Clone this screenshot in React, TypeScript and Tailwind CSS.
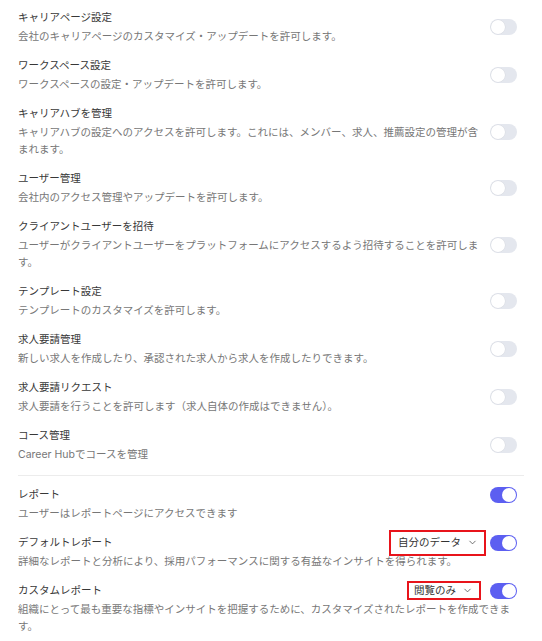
import { ChevronDown } from "lucide-react";

type Perm = {
  title: string;
  desc: string;
  on?: boolean;
};

const perms: Perm[] = [
  { title: "キャリアページ設定", desc: "会社のキャリアページのカスタマイズ・アップデートを許可します。" },
  { title: "ワークスペース設定", desc: "ワークスペースの設定・アップデートを許可します。" },
  {
    title: "キャリアハブを管理",
    desc: "キャリアハブの設定へのアクセスを許可します。これには、メンバー、求人、推薦設定の管理が含まれます。",
  },
  { title: "ユーザー管理", desc: "会社内のアクセス管理やアップデートを許可します。" },
  {
    title: "クライアントユーザーを招待",
    desc: "ユーザーがクライアントユーザーをプラットフォームにアクセスするよう招待することを許可します。",
  },
  { title: "テンプレート設定", desc: "テンプレートのカスタマイズを許可します。" },
  { title: "求人要請管理", desc: "新しい求人を作成したり、承認された求人から求人を作成したりできます。" },
  { title: "求人要請リクエスト", desc: "求人要請を行うことを許可します（求人自体の作成はできません）。" },
  { title: "コース管理", desc: "Career Hubでコースを管理" },
];

function Toggle({ on }: { on?: boolean }) {
  return (
    <div
      className={`relative shrink-0 w-[27px] h-[16px] rounded-full ${
        on ? "bg-[#5c5ff1]" : "bg-[#e4e7ee]"
      }`}
    >
      <span
        className={`absolute top-[1px] w-[14px] h-[14px] rounded-full bg-white ${
          on ? "right-[1px]" : "left-[1px] shadow-[0_0_0_0.5px_#d6d9e0]"
        }`}
      />
    </div>
  );
}

export default function App() {
  return (
    <div
      className="w-[542px] min-h-[641px] bg-white px-[18px] pt-[9px] text-[10.5px]"
      style={{ fontFamily: 'Inter, "Noto Sans CJK JP", sans-serif' }}
    >
      {/* basic permissions */}
      <div className="flex flex-col gap-[12px]">
        {perms.map((p) => (
          <div key={p.title} className="flex items-center gap-[6px] pr-[7px]">
            <div className="flex-1 min-w-0">
              <div className="leading-[17px] text-[#383838]">{p.title}</div>
              <p className="mt-[2px] leading-[17px] text-[#777777]">{p.desc}</p>
            </div>
            <Toggle on={p.on} />
          </div>
        ))}
      </div>

      <div className="mt-[12px] border-t border-[#ececec]" />

      {/* reports */}
      <div className="mt-[10px] flex flex-col gap-[12px]">
        <div>
          <div className="flex items-center justify-between h-[17px] pr-[7px]">
            <span className="text-[#383838]">レポート</span>
            <Toggle on />
          </div>
          <p className="mt-[2px] leading-[17px] text-[#777777]">
            ユーザーはレポートページにアクセスできます
          </p>
        </div>

        <div>
          <div className="flex items-center justify-between h-[17px] pr-[7px]">
            <span className="text-[#383838]">デフォルトレポート</span>
            <div className="flex items-center gap-[4px]">
              <button className="flex items-center h-[26px] border-2 border-[#e8141b] pl-[7px] pr-[6px] text-[#333]">
                <span>自分のデータ</span>
                <ChevronDown size={11} strokeWidth={1.8} className="ml-[6px] text-[#555]" />
              </button>
              <Toggle on />
            </div>
          </div>
          <p className="mt-[2px] leading-[17px] text-[#777777]">
            詳細なレポートと分析により、採用パフォーマンスに関する有益なインサイトを得られます。
          </p>
        </div>

        <div>
          <div className="flex items-center justify-between h-[17px] pr-[7px]">
            <span className="text-[#383838]">カスタムレポート</span>
            <div className="flex items-center gap-[9px]">
              <button className="flex items-center h-[19px] border-2 border-[#e8141b] pl-[5px] pr-[6px] text-[#333]">
                <span>閲覧のみ</span>
                <ChevronDown size={11} strokeWidth={1.8} className="ml-[6px] text-[#555]" />
              </button>
              <Toggle on />
            </div>
          </div>
          <p className="mt-[2px] leading-[17px] text-[#777777] pr-[10px]">
            組織にとって最も重要な指標やインサイトを把握するために、カスタマイズされたレポートを作成できます。
          </p>
        </div>
      </div>
    </div>
  );
}
